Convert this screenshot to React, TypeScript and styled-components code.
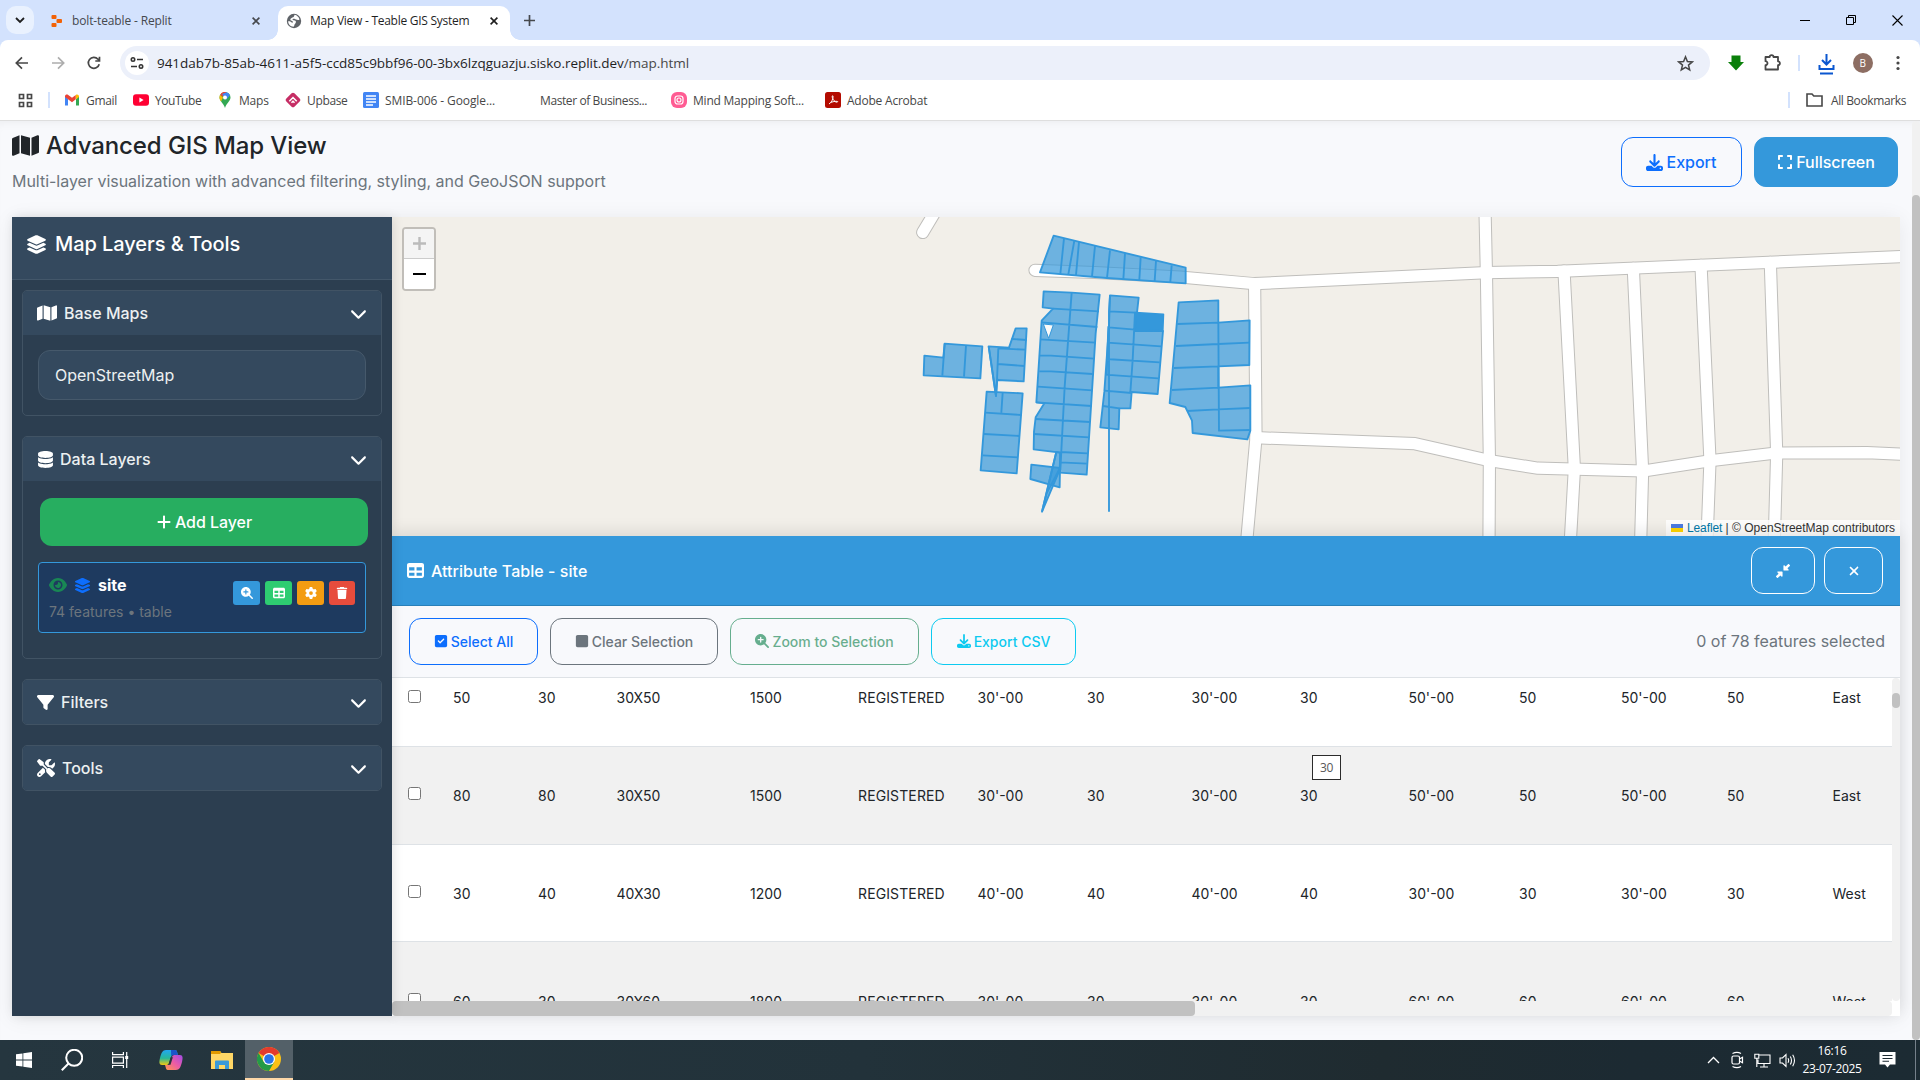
import React from "react";
import styled, { createGlobalStyle, css } from "styled-components";
import {
  FaMap, FaLayerGroup, FaDatabase, FaFilter, FaScrewdriverWrench, FaChevronDown, FaPlus, FaEye,
  FaMagnifyingGlassPlus, FaTable, FaGear, FaTrash, FaDownload, FaExpand, FaSquareCheck, FaSquare,
  FaXmark, FaDownLeftAndUpRightToCenter,
} from "react-icons/fa6";

const ui = `"Open Sans", "Noto Sans", sans-serif`;

const Global = createGlobalStyle`
  * { box-sizing: border-box; }
  body { margin: 0; overflow: hidden; font-family: Inter, "Liberation Sans", sans-serif; font-size: 16px; color: #212529; }
  button { font-family: inherit; margin: 0; padding: 0; background: none; border: 0; }
  svg { display: block; flex: none; }
`;

const Screen = styled.div`
  width: 1920px;
  height: 1080px;
  display: flex;
  flex-direction: column;
  overflow: hidden;
  background: #f8f9fc;
`;

/* ---------- browser chrome ---------- */
const TabStrip = styled.div`
  height: 40px;
  flex: none;
  display: flex;
  background: #d3e2fd;
  padding: 6px 0 0 6px;
  font-family: ${ui};
  font-size: 12px;
`;
const TabSearch = styled.button`
  width: 28px;
  height: 28px;
  border-radius: 10px;
  background: #e9f1fe;
  display: grid;
  place-items: center;
`;
const Tab = styled.div<{ $active?: boolean }>`
  width: ${(p) => (p.$active ? 232 : 228)}px;
  height: 34px;
  margin-left: ${(p) => (p.$active ? 0 : 16)}px;
  padding: 0 ${(p) => (p.$active ? 12 : 18)}px 5px ${(p) => (p.$active ? 8 : 0)}px;
  display: flex;
  align-items: center;
  gap: ${(p) => (p.$active ? 8 : 6)}px;
  color: ${(p) => (p.$active ? "#1f1f1f" : "#45484d")};
  border-radius: 10px 10px 0 0;
  position: relative;
  ${(p) =>
    p.$active &&
    css`
      background: #fff;
      &::before, &::after {
        content: "";
        position: absolute;
        bottom: 0;
        width: 10px;
        height: 10px;
      }
      &::before { left: -10px; background: radial-gradient(circle at 0 0, transparent 9.5px, #fff 10px); }
      &::after { right: -10px; background: radial-gradient(circle at 100% 0, transparent 9.5px, #fff 10px); }
    `}
`;
const TabTitle = styled.span<{ $ls: number }>`
  flex: 1;
  white-space: nowrap;
  letter-spacing: ${(p) => p.$ls}px;
`;
const NewTab = styled.div`
  width: 28px;
  height: 28px;
  margin-left: 5px;
  display: grid;
  place-items: center;
`;
const WindowButtons = styled.div`
  margin-left: auto;
  height: 28px;
  display: flex;
  div { width: 46px; display: grid; place-items: center; }
`;
const ToolbarBack = styled.div`background: #d3e2fd; flex: none;`;
const Toolbar = styled.div`
  height: 46px;
  background: #fff;
  border-radius: 8px 8px 0 0;
  display: flex;
  align-items: center;
  padding: 0 13px 0 12px;
`;
const NavIcons = styled.div`
  display: flex;
  gap: 16px;
  width: 108px;
`;
const Omnibox = styled.div`
  width: 1590px;
  height: 34px;
  border-radius: 17px;
  background: #ecf0fa;
  display: flex;
  align-items: center;
  padding: 0 16px 0 5px;
  font-family: ${ui};
  font-size: 13.5px;
  color: #1f1f1f;
`;
const SiteInfo = styled.div`
  width: 24px;
  height: 24px;
  border-radius: 12px;
  background: #fff;
  display: grid;
  place-items: center;
  margin-right: 8px;
`;
const Url = styled.span`
  flex: 1;
  letter-spacing: -0.035px;
  span { color: #474747; }
`;
const ToolActions = styled.div`
  flex: 1;
  display: flex;
  align-items: center;
  justify-content: space-between;
  padding-left: 16px;
`;
const Divider = styled.i<{ $h: number }>`
  width: 2px;
  height: ${(p) => p.$h}px;
  background: #d3e2fd;
`;
const Avatar = styled.span`
  width: 20px;
  height: 20px;
  border-radius: 10px;
  background: #8d6e63;
  color: #fff;
  font: 10px ${ui};
  display: grid;
  place-items: center;
`;
const Bookmarks = styled.div`
  height: 35px;
  background: #fff;
  border-bottom: 1px solid #dedede;
  display: flex;
  align-items: center;
  padding: 0 14px 6px 18px;
  font-family: ${ui};
  font-size: 12px;
  color: #474747;
  flex: none;
`;
const AppsCell = styled.div`
  width: 46px;
  display: flex;
  justify-content: space-between;
  align-items: center;
  padding-right: 14px;
`;
const Bookmark = styled.div<{ $w?: number; $ls?: number }>`
  width: ${(p) => (p.$w ? p.$w + "px" : "auto")};
  display: flex;
  align-items: center;
  gap: 6px;
  white-space: nowrap;
  letter-spacing: ${(p) => p.$ls ?? -0.22}px;
  svg { width: 16px; }
`;
const AllBookmarks = styled.div`
  margin-left: auto;
  display: flex;
  align-items: center;
  letter-spacing: -0.38px;
  svg { margin: 0 8px 0 16px; }
`;

/* ---------- page ---------- */
const Page = styled.div`
  flex: 1;
  min-height: 0;
  display: flex;
  box-shadow: inset 0 8px 10px -6px rgba(0, 0, 0, 0.05);
`;
const Content = styled.main`
  width: 1912px;
  padding: 0 12px;
`;
const PageScroll = styled.div`
  width: 8px;
  background: #f1f1f1;
  border-radius: 4px;
  padding-top: 74px;
  &::before {
    content: "";
    display: block;
    height: 845px;
    border-radius: 4px;
    background: #c1c1c1;
  }
`;
const PageHead = styled.header`
  height: 96px;
  display: flex;
  justify-content: space-between;
  padding: 9px 2px 0 0;
`;
const Title = styled.h1`
  margin: 0;
  height: 30px;
  font-size: 24px;
  font-weight: 500;
  letter-spacing: -0.09px;
  display: flex;
  align-items: center;
  gap: 7px;
`;
const Subtitle = styled.p`
  margin: 9px 0 0;
  line-height: 24px;
  letter-spacing: -0.02px;
  color: #6c757d;
`;
const HeadButtons = styled.div`
  display: flex;
  gap: 12px;
  padding-top: 7px;
`;
const BigButton = styled.button<{ $w: number; $solid?: boolean }>`
  width: ${(p) => p.$w}px;
  height: 50px;
  border-radius: 12px;
  border: 1px solid ${(p) => (p.$solid ? "#3498db" : "#0d6efd")};
  background: ${(p) => (p.$solid ? "#3498db" : "transparent")};
  color: ${(p) => (p.$solid ? "#fff" : "#0d6efd")};
  font-size: 16px;
  font-weight: 500;
  display: flex;
  align-items: center;
  justify-content: center;
  gap: 3px;
`;
const Workspace = styled.section`
  height: 799px;
  width: 1888px;
  display: flex;
  box-shadow: 0 2px 20px rgba(0, 0, 0, 0.07);
`;
const Sidebar = styled.aside`
  width: 380px;
  background: #2c3e50;
  box-shadow: 2px 0 10px rgba(0, 0, 0, 0.1);
  position: relative;
  z-index: 1;
`;
const SideHead = styled.div`
  height: 63px;
  background: #34495e;
  border-bottom: 1px solid #43576a;
  color: #fff;
  font-size: 20px;
  font-weight: 500;
  letter-spacing: -0.06px;
  display: flex;
  align-items: center;
  gap: 8px;
  padding: 0 14px 8px;
`;
const Sections = styled.div`
  padding: 10px;
  display: flex;
  flex-direction: column;
  gap: 20px;
`;
const Section = styled.div`
  border: 1px solid #415364;
  border-radius: 5px;
  overflow: hidden;
`;
const SectionHead = styled.div<{ $gap?: number }>`
  height: 44px;
  background: #34495e;
  color: #ecf0f1;
  font-weight: 500;
  display: flex;
  align-items: center;
  gap: ${(p) => p.$gap ?? 8}px;
  padding: 0 14px;
  svg { color: #fff; }
  svg:last-child { margin-left: auto; }
`;
const SectionBody = styled.div<{ $b: number }>`
  padding: 15px 15px ${(p) => p.$b}px;
`;
const Select = styled.div`
  height: 50px;
  border: 1px solid #46596b;
  border-radius: 12px;
  background: #34495e;
  color: #ecf0f1;
  padding: 0 16px;
  line-height: 48px;
`;
const AddButton = styled.button`
  width: 328px;
  height: 48px;
  margin: 2px 0 16px 2px;
  border-radius: 12px;
  background: #27ae60;
  color: #fff;
  font-size: 16px;
  font-weight: 500;
  letter-spacing: -0.05px;
  display: flex;
  align-items: center;
  justify-content: center;
  gap: 3px;
`;
const LayerItem = styled.div`
  height: 71px;
  border: 1px solid #3498db;
  border-radius: 4px;
  background: #1e3a5f;
  padding: 10px;
  display: flex;
  justify-content: space-between;
`;
const LayerName = styled.div`
  height: 24px;
  display: flex;
  align-items: center;
  gap: 7px;
  color: #fff;
  font-weight: 700;
`;
const LayerMeta = styled.div`
  font-size: 14px;
  line-height: 21px;
  margin-top: 4px;
  color: #6c757d;
`;
const LayerTools = styled.div`
  display: flex;
  gap: 5px;
  padding-top: 8px;
`;
const MiniButton = styled.button<{ $bg: string; $w?: number }>`
  width: ${(p) => p.$w ?? 27}px;
  height: 24px;
  border-radius: 3px;
  background: ${(p) => p.$bg};
  color: #fff;
  display: grid;
  place-items: center;
`;

/* ---------- map ---------- */
const Main = styled.div`
  width: 1508px;
  display: flex;
  flex-direction: column;
`;
const MapPane = styled.div`
  height: 319px;
  position: relative;
  background: #f2efe9;
  overflow: hidden;
`;
const ZoomControl = styled.div`
  position: absolute;
  left: 10px;
  top: 10px;
  width: 34px;
  height: 64px;
  border: 2px solid #c1beb9;
  border-radius: 4px;
  background: #fff;
  overflow: hidden;
`;
const ZoomBtn = styled.div<{ $off?: boolean }>`
  height: ${(p) => (p.$off ? 30 : 30)}px;
  background: ${(p) => (p.$off ? "#f4f4f4" : "#fff")};
  border-bottom: ${(p) => (p.$off ? "1px solid #ccc" : "0")};
  display: grid;
  place-items: center;
  padding-left: 1px;
`;
const Attribution = styled.div`
  position: absolute;
  right: 0;
  bottom: 0;
  height: 16px;
  padding: 0 5px;
  background: rgba(255, 255, 255, 0.8);
  font: 12px/16px "Liberation Sans", Arial, sans-serif;
  color: #333;
  display: flex;
  align-items: center;
  white-space: pre;
  a { color: #0078a8; margin-left: 4px; letter-spacing: -0.1px; }
`;

/* ---------- attribute table ---------- */
const TablePane = styled.div`
  flex: 1;
  min-height: 0;
  display: flex;
  flex-direction: column;
  background: #fff;
  position: relative;
  box-shadow: 0 -4px 15px rgba(0, 0, 0, 0.1);
`;
const TableHead = styled.div`
  height: 70px;
  background: #3498db;
  border-bottom: 1px solid #2980b9;
  display: flex;
  align-items: center;
  gap: 12px;
  padding: 0 17px 0 15px;
  color: #fff;
`;
const TableTitle = styled.div`
  display: flex;
  align-items: center;
  gap: 7px;
  font-weight: 500;
  letter-spacing: 0.05px;
  flex: 1;
`;
const GhostButton = styled.button<{ $w: number; $c: string; $dim?: boolean }>`
  width: ${(p) => p.$w}px;
  height: 47px;
  border: 1px solid ${(p) => p.$c};
  border-radius: 12px;
  color: ${(p) => p.$c};
  opacity: ${(p) => (p.$dim ? 0.65 : 1)};
  font-size: 14px;
  font-weight: 500;
  display: flex;
  align-items: center;
  justify-content: center;
  gap: 3px;
`;
const HeadActions = styled.div`display: flex; gap: 9px;`;
const TableTools = styled.div`
  height: 72px;
  background: #f8f9fc;
  border-bottom: 1px solid #dee2e6;
  display: flex;
  align-items: center;
  gap: 12px;
  padding: 0 15px 1px 17px;
`;
const Count = styled.span`
  margin-left: auto;
  color: #6c757d;
`;
const TableBody = styled.div`
  flex: 1;
  min-height: 0;
  display: flex;
`;
const Rows = styled.div`
  width: 1500px;
  height: 323px;
  overflow: hidden;
`;
const Row = styled.div<{ $alt?: boolean; $first?: boolean; $h?: number }>`
  height: ${(p) => p.$h ?? 97.7}px;
  margin-top: ${(p) => (p.$first ? -28.6 : 0)}px;
  display: grid;
  grid-template-columns: 61px 85px 78.5px 133.5px 108px 119.5px 109.5px 104.5px 108.5px 108.5px 110.5px 102px 106px 105.5px 60px;
  align-items: center;
  background: ${(p) => (p.$alt ? "#f1f1f1" : "#fff")};
  border-bottom: 1px solid #dee2e6;
  font-size: 14px;
  color: #212529;
  white-space: nowrap;
  span:nth-child(6) { letter-spacing: 0.12px; }
`;
const Check = styled.input`
  appearance: none;
  width: 13px;
  height: 13px;
  margin: 0 0 3px 16px;
  border: 1px solid #767676;
  border-radius: 2.5px;
  background: #fff;
`;
const VScroll = styled.div`
  width: 8px;
  height: 323px;
  background: #f1f1f1;
  border-radius: 4px;
  padding-top: 15px;
  &::before {
    content: "";
    display: block;
    height: 15px;
    border-radius: 4px;
    background: #c1c1c1;
  }
`;
const HScroll = styled.div`
  width: 1500px;
  height: 15px;
  background: #f1f1f1;
  border-radius: 4px;
  &::before {
    content: "";
    display: block;
    width: 803px;
    height: 15px;
    border-radius: 4px;
    background: #c1c1c1;
  }
`;
const Tooltip = styled.div`
  position: absolute;
  left: 920px;
  top: 219px;
  width: 29px;
  height: 25px;
  border: 1px solid #2b2b2b;
  background: #fff;
  color: #575757;
  font: 12px/23px ${ui};
  letter-spacing: -0.3px;
  text-align: center;
`;

/* ---------- taskbar ---------- */
const Taskbar = styled.footer`
  height: 40px;
  flex: none;
  background: linear-gradient(90deg, #25363f, #22323a 45%, #1f2b30 72%, #1c2a32 85%, #1c2b33);
  display: flex;
  color: #fff;
`;
const TaskItem = styled.div<{ $active?: boolean; $w?: number }>`
  width: ${(p) => p.$w ?? 49}px;
  display: grid;
  place-items: center;
  background: ${(p) => (p.$active ? "#536068" : "transparent")};
  border-bottom: ${(p) => (p.$active ? "2px solid #ffd8a8" : "0")};
`;
const Tray = styled.div`
  margin-left: auto;
  width: 94px;
  display: flex;
  align-items: center;
  gap: 8px;
`;
const Clock = styled.div`
  width: 62px;
  text-align: center;
  font: 12px/18px ${ui};
  letter-spacing: -0.35px;
  padding-top: 2px;
  white-space: nowrap;
`;
const Notice = styled.div`
  width: 53px;
  display: flex;
  align-items: center;
  padding-left: 16px;
  border-right: 1px solid #75808a;
  margin-right: 4px;
`;

const stroke = (c: string, w = 1.5) => ({ fill: "none", stroke: c, strokeWidth: w });

const CloseX = ({ c }: { c: string }) => (
  <svg width="8" height="8" viewBox="0 0 8 8" {...stroke(c, 1.6)}><path d="M.6.6l6.8 6.8M7.4.6L.6 7.4" /></svg>
);
const Chevron = () => <FaChevronDown size={17} />;

const roads = [
  "M1035 270.3L1095 272.5 1180 277 1254.6 283.7 1486.4 272.7 1557.7 271.3 1636 268 1910 256.2",
  "M1256 437.7L1415 443.7 1489 460.5 1538 468.2 1643.6 471 1710 460.7 1776 453 1867 452.7 1905 454.3",
  "M1254.6 283.7L1256 437.7 1246.8 540",
  "M1485 210L1486.4 272.7 1489.4 460 1489 540",
  "M1564 271L1574.4 468.7 1570.4 540",
  "M1633.3 268.3L1642.6 470.7 1640.7 540",
  "M1701 265.3L1710 460.7 1707 540",
  "M1770.3 262.3L1776.7 453.3 1774.3 540",
  "M922.7 232.5L935 212",
];
const parcels = [
  "461,77 857,173 857,220 620,204 420,187",
  "431,244 515,248 599,254 587,370 560,794 480,788 481,728 401,718 402,665 407,622 433,580 409,577 418,440 425,332 459,296 428,292",
  "394,764 480,774 479,832 391,807",
  "469,726 481,728 479,780 426,905",
  "630,256 716,263 711,308 705,308 705,363 789,363 773,552 695,546 691,595 658,595 656,658 601,652 613,545 627,349",
  "836,277 955,271 955,338 1049,331 1048,465 955,469 955,533 1051,526 1051,662 1042,688 878,669 876,632 856,591 809,579",
  "73,437 130,443 134,401 247,409 241,505 71,496",
  "266,409 327,413 347,355 380,355 371,514 291,510 288,558",
  "260,545 368,550 350,790 242,781",
];
const lines = [
  "M492 85L481 192M523 92L505 193M537 96L528 195M585 108L576 199M630 121L621 204M675 130L670 208M722 142L718 210M768 153L764 213M815 166L811 216",
  "M515 248L494 530 481 780M459 296L597 304M425 337L592 351M420 388L587 398M418 437L453 437 582 446M418 484L453 484 578 492M414 530L577 541M409 577L575 588M407 627L570 636M402 672L567 682M481 726L562 730M481 757L560 761",
  "M480 774L440 850 426 905M469 726L426 905",
  "M627 304L705 308M705 308L698 450 691 548M626 352L705 359M622 398L783 409M618 447L779 457M615 494L775 505M613 542L695 549M609 588L658 595M630 256L627 304 627 905M625 349L620 495",
  "M955 338L957 662 1051 660M832 342L955 338M828 408L955 402 1048 398M822 474L955 469M816 540L955 533M861 603L955 598 1051 594",
  "M134 401L127 497M198 407L192 500",
  "M334 387L380 390M295 415L375 419M295 415L291 510M293 462L373 468M266 409L288 558 292 505",
  "M308 548L304 608M256 608L364 615M252 672L360 678M248 736L354 742",
];

const MapDrawing = () => (
  <svg width="1508" height="319" viewBox="392 217 1508 319">
    <g fill="none" stroke="#bfbebb" strokeWidth="13.2" strokeLinecap="round" strokeLinejoin="round">
      {roads.map((d) => <path key={d} d={d} />)}
    </g>
    <g fill="none" stroke="#fff" strokeWidth="11.2" strokeLinecap="round" strokeLinejoin="round">
      {roads.map((d) => <path key={d} d={d} />)}
    </g>
    <g transform="translate(900 210) scale(.33333)" stroke="#3498db" strokeWidth="5.6" strokeLinejoin="round">
      {parcels.map((p) => <polygon key={p} points={p} fill="#3498db" fillOpacity=".7" />)}
      <polygon points="707,308 790,313 788,363 705,361" fill="#3498db" />
      <polygon points="430,342 460,345 446,385" fill="#fbfaf8" strokeWidth="3" />
      <g fill="none">{lines.map((d) => <path key={d} d={d} />)}</g>
    </g>
  </svg>
);

const rows: { alt?: boolean; first?: boolean; h?: number; cells: string[] }[] = [
  { first: true, cells: ["50", "30", "30X50", "1500", "REGISTERED", "30'-00", "30", "30'-00", "30", "50'-00", "50", "50'-00", "50", "East"] },
  { alt: true, cells: ["80", "80", "30X50", "1500", "REGISTERED", "30'-00", "30", "30'-00", "30", "50'-00", "50", "50'-00", "50", "East"] },
  { cells: ["30", "40", "40X30", "1200", "REGISTERED", "40'-00", "40", "40'-00", "40", "30'-00", "30", "30'-00", "30", "West"] },
  { alt: true, h: 119, cells: ["60", "30", "30X60", "1800", "REGISTERED", "30'-00", "30", "30'-00", "30", "60'-00", "60", "60'-00", "60", "West"] },
];

function Browser() {
  return (
    <>
      <TabStrip>
        <TabSearch><svg width="10" height="7" viewBox="0 0 10 7" {...stroke("#1f1f1f", 1.8)}><path d="M1 1l4 4 4-4" /></svg></TabSearch>
        <Tab>
          <svg width="16" height="16" viewBox="0 0 16 16" fill="#f26207"><rect x="1.500" y="2" width="5" height="4" rx="1" /><rect x="6.500" y="6" width="5.500" height="4" rx="1" /><rect x="1.500" y="10" width="5" height="4" rx="1" /></svg>
          <TabTitle $ls={-0.14}>bolt-teable - Replit</TabTitle>
          <CloseX c="#45484d" />
        </Tab>
        <Tab $active>
          <svg width="16" height="16" viewBox="0 0 16 16"><circle cx="8" cy="8" r="7.2" fill="#5f6368" /><path d="M8.6 1.8c2.3.5 4.5 2.4 4.9 4.700-.8.9-2.600.4-3.500.1-1-.4-1.300-1-2.500-.9-1.300.1-1.300 1.400.1 1.600 1.600.2 2.500.6 2.300 1.900-.2 1.300-1.300 1.500-1.500 2.700-.1.700-.300 1.400-.900 1.900C4.300 13.400 2.200 11 2.100 8.200c1.200-.2 2.800.1 3.300 1.100.3.600 1.200.6 1.400-.1.200-1-.8-1.200-1.900-1.600C3.900 7.200 4.300 5.600 5.600 5c1.100-.5 2-.6 2.300-1.400z" fill="#fff" /></svg>
          <TabTitle $ls={-0.26}>Map View - Teable GIS System</TabTitle>
          <CloseX c="#1f1f1f" />
        </Tab>
        <NewTab><svg width="11" height="11" viewBox="0 0 11 11" {...stroke("#45484d", 1.7)}><path d="M5.5 0v11M0 5.5h11" /></svg></NewTab>
        <WindowButtons>
          <div><svg width="10" height="10" viewBox="0 0 10 10" {...stroke("#000", 1)}><path d="M0 5.5h10" /></svg></div>
          <div><svg width="10" height="10" viewBox="0 0 10 10" {...stroke("#000", 1)}><path d="M.5 2.5h7v7h-7zM2.5 2.5v-2h7v7h-2" /></svg></div>
          <div><svg width="11" height="11" viewBox="0 0 11 11" {...stroke("#000", 1.1)}><path d="M.5.5l10 10M10.5.5l-10 10" /></svg></div>
        </WindowButtons>
      </TabStrip>
      <ToolbarBack>
        <Toolbar>
          <NavIcons>
            <svg width="20" height="20" viewBox="0 0 20 20" {...stroke("#474747", 1.7)}><path d="M16 10H4.500M10 4.300L4.300 10l5.700 5.700" /></svg>
            <svg width="20" height="20" viewBox="0 0 20 20" {...stroke("#adadad", 1.7)}><path d="M4 10h11.500M10 4.300l5.700 5.700-5.700 5.700" /></svg>
            <svg width="20" height="20" viewBox="0 0 20 20" {...stroke("#474747", 1.7)}><path d="M15.200 11.200A5.500 5.500 0 1 1 14 6.200l1.300 1.300M15.500 3.800v4.200h-4.200" /></svg>
          </NavIcons>
          <Omnibox>
            <SiteInfo><svg width="14" height="14" viewBox="0 0 14 14" {...stroke("#333", 1.6)}><circle cx="3" cy="3.500" r="1.700" /><path d="M7 3.500h6M1 10.500h6" /><circle cx="11" cy="10.500" r="1.700" /></svg></SiteInfo>
            <Url>941dab7b-85ab-4611-a5f5-ccd85c9bbf96-00-3bx6lzqguazju.sisko.replit.dev<span>/map.html</span></Url>
            <svg width="17" height="17" viewBox="0 0 17 17" {...stroke("#474747", 1.5)}><path d="M8.500 1.800l1.900 4.700 4.900.4-3.800 3.200 1.200 4.800-4.200-2.600-4.200 2.600 1.200-4.800L1.700 6.900l4.900-.4z" /></svg>
          </Omnibox>
          <ToolActions>
            <svg width="20" height="20" viewBox="0 0 20 20" fill="#0b800b"><path d="M5.500 2.500h9v6.500H18l-8 8.500-8-8.500h3.500z" /></svg>
            <svg width="20" height="20" viewBox="0 0 20 20" {...stroke("#474747", 1.8)} strokeLinejoin="round"><path d="M3.500 4h4.200a1.900 1.900 0 0 1 3.800 0h4.500v4.300a1.900 1.900 0 0 1 0 3.800v4.400H3.500v-4.300a2 2 0 0 0 0-4z" /></svg>
            <Divider $h={16} />
            <svg width="20" height="24" viewBox="0 0 20 24" {...stroke("#0b57d0", 2)}><path d="M9.500 3v10M5 9l4.500 4.500L14 9M2.500 14v4h14v-4M3 22.500h13" /></svg>
            <Avatar>B</Avatar>
            <svg width="18" height="18" viewBox="0 0 18 18" fill="#474747"><circle cx="9" cy="3.500" r="1.600" /><circle cx="9" cy="9" r="1.600" /><circle cx="9" cy="14.500" r="1.600" /></svg>
          </ToolActions>
        </Toolbar>
      </ToolbarBack>
      <Bookmarks>
        <AppsCell>
          <svg width="15" height="15" viewBox="0 0 15 15" {...stroke("#474747", 1.7)}><path d="M1.500 1.500h4v4h-4zM9.500 1.500h4v4h-4zM1.500 9.500h4v4h-4zM9.500 9.500h4v4h-4z" /></svg>
          <Divider $h={16} />
        </AppsCell>
        <Bookmark $w={69} $ls={-0.3}>
          <svg height="16" viewBox="0 0 16 16"><path d="M1 4v9.500h3V7z" fill="#4285f4" /><path d="M15 4v9.500h-3V7z" fill="#34a853" /><path d="M1 4.300C1 2.500 3 2 4.200 2.900L8 5.800l3.800-2.900v4.300L8 10.200 1 4.900z" fill="#ea4335" /><path d="M11.800 2.900C13 2 15 2.500 15 4.500v.400l-3.200 2.500z" fill="#fbbc04" /></svg>
          Gmail
        </Bookmark>
        <Bookmark $w={84} $ls={-0.45}>
          <svg height="16" viewBox="0 0 16 16"><rect y="2.200" width="16" height="11.600" rx="3" fill="#ff0033" /><path d="M6.400 5.500v5L10.600 8z" fill="#fff" /></svg>
          YouTube
        </Bookmark>
        <Bookmark $w={68}>
          <svg height="16" viewBox="0 0 16 16"><path d="M8 0a5.500 5.500 0 0 1 5.500 5.500C13.500 9 9.500 11 8 16 6.500 11 2.500 9 2.500 5.500A5.500 5.500 0 0 1 8 0z" fill="#34a853" /><path d="M3 3.200A5.500 5.500 0 0 1 9.700.3L6 4.500z" fill="#ea4335" /><path d="M9.700.3a5.500 5.500 0 0 1 3.300 3L9 8 5 2z" fill="#4285f4" /><path d="M2.500 5.500c0-1 .2-1.700.6-2.400L6 5.500l-2 4c-1-1.200-1.500-2.500-1.500-4z" fill="#fbbc04" /><circle cx="8" cy="5.500" r="2" fill="#fff" /></svg>
          Maps
        </Bookmark>
        <Bookmark $w={78} $ls={-0.35}>
          <svg height="16" viewBox="0 0 16 16"><rect x="2.300" y="2.300" width="11.400" height="11.400" rx="2" transform="rotate(45 8 8)" fill="#c62e65" /><path d="M4.300 9.200L8 5.500l3.700 3.700M6.500 10.800L8 9.300l1.500 1.500" {...stroke("#fff", 1.5)} /></svg>
          Upbase
        </Bookmark>
        <Bookmark $w={155} $ls={-0.09}>
          <svg height="16" viewBox="0 0 16 16"><rect width="16" height="16" rx="1.500" fill="#4285f4" /><path d="M3 4h10M3 7h10M3 10h10M3 13h7" {...stroke("#fff", 1.4)} /></svg>
          SMIB-006 - Google...
        </Bookmark>
        <Bookmark $w={153} $ls={-0.4}><svg height="16" />Master of Business...</Bookmark>
        <Bookmark $w={154}>
          <svg height="16" viewBox="0 0 16 16"><rect width="16" height="16" rx="6" fill="#ff5c93" /><rect x="4" y="4" width="8" height="8" rx="2.500" {...stroke("#fff", 1.2)} /><circle cx="8" cy="8" r="2" {...stroke("#fff", 1.1)} /></svg>
          Mind Mapping Soft...
        </Bookmark>
        <Bookmark>
          <svg height="16" viewBox="0 0 16 16"><rect width="16" height="16" rx="2.500" fill="#b30b00" /><path d="M4 12c2-1 4.500-5 4-8-.8-.8-1.200.5-.3 2.500S11 11 12.500 10s-3.500-1-7 .6" {...stroke("#fff", 1)} /></svg>
          Adobe Acrobat
        </Bookmark>
        <AllBookmarks>
          <Divider $h={16} />
          <svg width="17" height="14" viewBox="0 0 17 14" {...stroke("#474747", 1.6)}><path d="M1 1h5l1.800 2H16v10H1z" /></svg>
          All Bookmarks
        </AllBookmarks>
      </Bookmarks>
    </>
  );
}

function LayersPanel() {
  return (
    <Sidebar>
      <SideHead><FaLayerGroup size={21} />Map Layers &amp; Tools</SideHead>
      <Sections>
        <Section>
          <SectionHead $gap={7}><FaMap size={20} />Base Maps<Chevron /></SectionHead>
          <SectionBody $b={15}><Select>OpenStreetMap</Select></SectionBody>
        </Section>
        <Section>
          <SectionHead $gap={6}><FaDatabase size={17} />Data Layers<Chevron /></SectionHead>
          <SectionBody $b={25}>
            <AddButton><FaPlus size={16} />Add Layer</AddButton>
            <LayerItem>
              <div>
                <LayerName><FaEye size={18} color="#198754" /><FaLayerGroup size={17} color="#0d6efd" />site</LayerName>
                <LayerMeta>74 features • table</LayerMeta>
              </div>
              <LayerTools>
                <MiniButton $bg="#3498db"><FaMagnifyingGlassPlus size={12} /></MiniButton>
                <MiniButton $bg="#2ecc71"><FaTable size={12} /></MiniButton>
                <MiniButton $bg="#f39c12"><FaGear size={12} /></MiniButton>
                <MiniButton $bg="#e74c3c" $w={26}><FaTrash size={12} /></MiniButton>
              </LayerTools>
            </LayerItem>
          </SectionBody>
        </Section>
        <Section><SectionHead $gap={7}><FaFilter size={17} />Filters<Chevron /></SectionHead></Section>
        <Section><SectionHead $gap={7}><FaScrewdriverWrench size={18} />Tools<Chevron /></SectionHead></Section>
      </Sections>
    </Sidebar>
  );
}

function AttributeTable() {
  return (
    <TablePane>
      <TableHead>
        <TableTitle><FaTable size={17} />Attribute Table - site</TableTitle>
        <HeadActions>
          <GhostButton $w={64} $c="#fff"><FaDownLeftAndUpRightToCenter size={14} /></GhostButton>
          <GhostButton $w={59} $c="#fff"><FaXmark size={14} /></GhostButton>
        </HeadActions>
      </TableHead>
      <TableTools>
        <GhostButton $w={129} $c="#0d6efd"><FaSquareCheck size={14} />Select All</GhostButton>
        <GhostButton $w={168} $c="#6c757d"><FaSquare size={14} />Clear Selection</GhostButton>
        <GhostButton $w={189} $c="#198754" $dim><FaMagnifyingGlassPlus size={14} />Zoom to Selection</GhostButton>
        <GhostButton $w={145} $c="#0dcaf0"><FaDownload size={14} />Export CSV</GhostButton>
        <Count>0 of 78 features selected</Count>
      </TableTools>
      <TableBody>
        <Rows>
          {rows.map((r, i) => (
            <Row key={i} $alt={r.alt} $first={r.first} $h={r.h}>
              <Check type="checkbox" />
              {r.cells.map((c, j) => <span key={j}>{c}</span>)}
            </Row>
          ))}
        </Rows>
        <VScroll />
      </TableBody>
      <HScroll />
      <Tooltip>30</Tooltip>
    </TablePane>
  );
}

function WindowsTaskbar() {
  return (
    <Taskbar>
      <TaskItem $w={48}><svg width="16" height="16" viewBox="0 0 16 16" fill="#fff"><path d="M0 2.300L6.500 1.400v6.200H0zM7.300 1.300L16 0v7.600H7.300zM0 8.400h6.500v6.200L0 13.700zM7.300 8.400H16V16l-8.700-1.300z" /></svg></TaskItem>
      <TaskItem $w={48}><svg width="22" height="22" viewBox="0 0 22 22" {...stroke("#fff", 2)}><circle cx="13.200" cy="8.800" r="8" /><path d="M7.500 14.500L.8 21.200" /></svg></TaskItem>
      <TaskItem $w={48}><svg width="17" height="16" viewBox="0 0 17 16" {...stroke("#fff", 1.2)}><path d="M.6 0v2.600h10.800V0M.6 5.100h10.800v6H.6zM.6 16v-2.500h10.800V16M14.700 0v16" /><path d="M13.200 4h3v3h-3z" fill="#fff" stroke="none" /></svg></TaskItem>
      <TaskItem $w={54}>
        <svg width="24" height="22" viewBox="0 0 24 22">
          <defs>
            <linearGradient id="cpa" x1="0" y1="0" x2="0" y2="1"><stop offset="0" stopColor="#22a7f2" /><stop offset=".55" stopColor="#27b89a" /><stop offset="1" stopColor="#f2c811" /></linearGradient>
            <linearGradient id="cpb" x1="1" y1="0" x2="0" y2="1"><stop offset="0" stopColor="#a04be8" /><stop offset=".5" stopColor="#ec5ba5" /><stop offset="1" stopColor="#ff9a4a" /></linearGradient>
          </defs>
          <path d="M7 1h9c2 0 2 2 3 5h-4c-3 0-3 2-4 5l-1 3c-.6 1.600-1.500 2-3 2H3c-3 0-3-3-2-7 1.300-5 2.500-8 6-8z" fill="url(#cpa)" />
          <path d="M12 1h4c2 0 2 2 3 5h-4c-1.500 0-2.300.5-2.800 1.500z" fill="#1b54c9" />
          <path d="M17 21H9c-2 0-2-2-3-5h2c3 0 3-2 4-5l1-3c.6-1.600 1.500-2 3-2h5c3 0 3 3 2 7-1.300 5-2.500 8-6 8z" fill="url(#cpb)" />
          <path d="M11.500 8.500L10 14c-.3 1-.8 1.500-1 1.700h2.500L13.300 10c.3-1 .7-1.600 1-1.800z" fill="#25363f" />
        </svg>
      </TaskItem>
      <TaskItem $w={47}><svg width="22" height="18" viewBox="0 0 22 18"><path d="M0 0h9l1.500 2H22v16H0z" fill="#ffd766" /><path d="M0 0h9l1.200 1.500L9 3H0z" fill="#e19a00" /><path d="M4 10.500C4 10 4.500 9.500 5 9.500h12c.5 0 1 .5 1 1V18h-4v-4H8v4H4z" fill="#3a9ad9" /></svg></TaskItem>
      <TaskItem $active $w={48}>
        <svg width="24" height="24" viewBox="0 0 24 24">
          <circle cx="12" cy="12" r="12" fill="#fbc116" />
          <path d="M12 12L1.600 6A12 12 0 0 1 22.400 6z" fill="#e33b2e" />
          <path d="M1.600 6A12 12 0 0 0 12 24l5.200-9L12 12 6.800 15z" fill="#239a48" />
          <circle cx="12" cy="12" r="6" fill="#fff" /><circle cx="12" cy="12" r="4.800" fill="#2a74e8" />
        </svg>
      </TaskItem>
      <Tray>
        <svg width="13" height="8" viewBox="0 0 13 8" {...stroke("#fff", 1.3)}><path d="M1 7l5.500-5.500L12 7" /></svg>
        <svg width="18" height="18" viewBox="0 0 18 18" {...stroke("#fff", 1.2)}><rect x="4" y="5" width="7.500" height="8" rx="1.500" /><path d="M11.500 8l3-1.700v5.500l-3-1.700M4.500 2.500Q9 .2 13 2.500M4.500 15.500Q9 17.800 13 15.500" /></svg>
        <svg width="17" height="15" viewBox="0 0 17 15" {...stroke("#fff", 1.1)}><path d="M5 2h11v8.500H4V6.500M10 10.500V14M6 14h8M.8 1.300h4v4h-4zM2.800 5.300V14" /></svg>
        <svg width="17" height="15" viewBox="0 0 17 15" {...stroke("#fff", 1.1)}><path d="M1 5h2.500L7 1.500v12L3.500 10H1zM9 5.200q1.300 2.300 0 4.600M11.300 3.500q2.400 4 0 8M13.700 1.800q3.600 5.700 0 11.400" /></svg>
      </Tray>
      <Clock>16:16<br />23-07-2025</Clock>
      <Notice><svg width="17" height="17" viewBox="0 0 17 17"><path d="M.5 0h16v12.500h-5.500l-2.500 3-2.500-3H.5z" fill="#fff" /><path d="M3.500 3.500h10M3.500 6.500h10M3.500 9.300h6.500" {...stroke("#1c2a32", 1.1)} /></svg></Notice>
    </Taskbar>
  );
}

export default function App() {
  return (
    <Screen>
      <Global />
      <Browser />
      <Page>
        <Content>
          <PageHead>
            <div>
              <Title><FaMap size={27} />Advanced GIS Map View</Title>
              <Subtitle>Multi-layer visualization with advanced filtering, styling, and GeoJSON support</Subtitle>
            </div>
            <HeadButtons>
              <BigButton $w={121}><FaDownload size={17} />Export</BigButton>
              <BigButton $w={144} $solid><FaExpand size={16} />Fullscreen</BigButton>
            </HeadButtons>
          </PageHead>
          <Workspace>
            <LayersPanel />
            <Main>
              <MapPane>
                <MapDrawing />
                <ZoomControl>
                  <ZoomBtn $off><svg width="13" height="13" viewBox="0 0 13 13" {...stroke("#bbb", 2.4)}><path d="M6.500 0v13M0 6.500h13" /></svg></ZoomBtn>
                  <ZoomBtn><svg width="13" height="2" viewBox="0 0 13 2"><path d="M0 0h13v2H0z" /></svg></ZoomBtn>
                </ZoomControl>
                <Attribution>
                  <svg width="12" height="8" viewBox="0 0 12 8"><path fill="#4c7be1" d="M0 0h12v4H0z" /><path fill="#ffd500" d="M0 4h12v4H0z" /></svg>
                  <a>Leaflet</a> | © OpenStreetMap contributors
                </Attribution>
              </MapPane>
              <AttributeTable />
            </Main>
          </Workspace>
        </Content>
        <PageScroll />
      </Page>
      <WindowsTaskbar />
    </Screen>
  );
}
